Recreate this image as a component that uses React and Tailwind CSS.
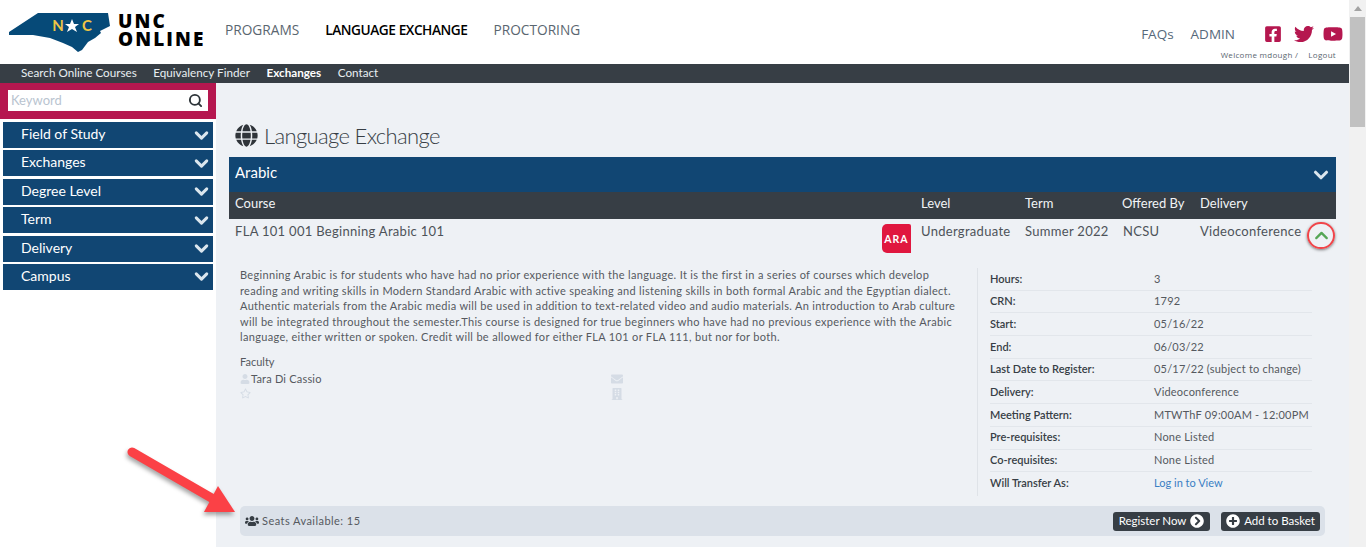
import { ChevronDown, ChevronUp, Search } from "lucide-react";
import {
  FaFacebookSquare,
  FaTwitter,
  FaYoutube,
  FaGlobe,
  FaUsers,
  FaChevronCircleRight,
  FaPlusCircle,
  FaUser,
  FaEnvelope,
  FaBuilding,
  FaRegStar,
} from "react-icons/fa";

const SUBNAV = ["Search Online Courses", "Equivalency Finder", "Exchanges", "Contact"];
const FILTERS = ["Field of Study", "Exchanges", "Degree Level", "Term", "Delivery", "Campus"];
const DETAILS = [
  ["Hours:", "3"],
  ["CRN:", "1792"],
  ["Start:", "05/16/22"],
  ["End:", "06/03/22"],
  ["Last Date to Register:", "05/17/22 (subject to change)"],
  ["Delivery:", "Videoconference"],
  ["Meeting Pattern:", "MTWThF 09:00AM - 12:00PM"],
  ["Pre-requisites:", "None Listed"],
  ["Co-requisites:", "None Listed"],
  ["Will Transfer As:", "Log in to View"],
];

function Logo() {
  return (
    <div className="flex items-start gap-[8px] w-[203px] pl-[9px]">
      <svg width="101" height="40" viewBox="0 0 101 40" className="shrink-0">
        <polygon
          points="0,20 29,1 99,1 101,14 91,19 92,21 86,26 79,30 73,38 69,40 63,35 54,31 41,26 24,23 0,23"
          fill="#064a78"
        />
        <text x="49" y="19" fontSize="15" fontWeight="700" fill="#efc545" fontFamily="Lato" textAnchor="middle">N</text>
        <polygon points="63,7 65,12 70,12 66,15 68,20 63,17 58,20 60,15 56,12 61,12" fill="#fff" />
        <text x="78" y="19" fontSize="15" fontWeight="700" fill="#efc545" fontFamily="Lato" textAnchor="middle">C</text>
      </svg>
      <div className="font-['Open_Sans',sans-serif] font-extrabold text-[19px] leading-[18px] tracking-[2.1px] text-black">
        <div>UNC</div>
        <div>ONLINE</div>
      </div>
    </div>
  );
}

function Header() {
  return (
    <header className="h-[64px] shrink-0 bg-white flex font-['Open_Sans',sans-serif]">
      <div className="pt-[12px]">
        <Logo />
      </div>
      <nav className="flex gap-[26px] ml-[22px] pt-[21px] text-[13.7px] leading-[18px] text-[#5a6670] h-fit">
        <span>PROGRAMS</span>
        <span className="text-black font-semibold tracking-[-0.45px]">LANGUAGE EXCHANGE</span>
        <span>PROCTORING</span>
      </nav>
      <div className="ml-auto flex flex-col items-end">
        <div className="flex items-center h-[46px] pt-[22px] pr-[6px] text-[13.5px] text-[#56687a]">
          <span className="mr-[17px]">FAQs</span>
          <span className="mr-[29px]">ADMIN</span>
          <FaFacebookSquare className="text-[18px] text-[#b5174f] mr-[12px]" />
          <FaTwitter className="text-[20px] text-[#b5174f] mr-[9px]" />
          <FaYoutube className="text-[20px] text-[#b5174f]" />
        </div>
        <div className="text-[8px] leading-[10px] mt-[4px] tracking-[0.3px] text-[#5a6670] pr-[13px]">
          Welcome mdough /<span className="ml-[10px]">Logout</span>
        </div>
      </div>
    </header>
  );
}

function SubNav() {
  return (
    <div className="h-[19px] shrink-0 bg-[#373e45] flex items-center pl-[21px] pb-[1px] gap-[16.5px] text-[11.7px] text-[#e8eef2] font-['Lato',sans-serif]">
      {SUBNAV.map((item) => (
        <span key={item} className={item === "Exchanges" ? "font-bold text-white" : ""}>
          {item}
        </span>
      ))}
    </div>
  );
}

function Sidebar() {
  return (
    <aside className="w-[216px] shrink-0 bg-white font-['Lato',sans-serif]">
      <div className="h-[36px] bg-[#b5174f] px-[8px] pt-[7px]">
        <div className="h-[21px] bg-white flex items-center justify-between pl-[3px] pr-[5px]">
          <span className="text-[13px] text-[#b9c4d0]">Keyword</span>
          <Search size={15} strokeWidth={3} className="text-[#2c3338]" />
        </div>
      </div>
      <div className="flex flex-col gap-[2.4px] pl-[3px] w-[213px] pt-[3px]">
        {FILTERS.map((item) => (
          <div key={item} className="h-[26px] bg-[#114673] flex items-center justify-between pl-[18px] pr-[1px] text-[14px] text-white">
            <span className="-mt-[3px]">{item}</span>
            <ChevronDown size={21} strokeWidth={3.4} className="text-[#dbe6ee]" />
          </div>
        ))}
      </div>
    </aside>
  );
}

function CourseBody() {
  return (
    <div className="flex pl-[11px] pt-[8px] h-[247px]">
      <div className="w-[737px] shrink-0 pr-[18px] text-[#55595f] font-['Lato',sans-serif]">
        <p className="text-[11px] leading-[15.6px] tracking-[0.32px]">
          Beginning Arabic is for students who have had no prior experience with the language. It is the first in a series of courses which develop reading and writing skills in Modern Standard Arabic with active speaking and listening skills in both formal Arabic and the Egyptian dialect. Authentic materials from the Arabic media will be used in addition to text-related video and audio materials. An introduction to Arab culture will be integrated throughout the semester.This course is designed for true beginners who have had no previous experience with the Arabic language, either written or spoken. Credit will be allowed for either FLA 101 or FLA 111, but nor for both.
        </p>
        <div className="mt-[9px] text-[11px] leading-[15px] h-[17px]">Faculty</div>
        <div className="flex h-[16px] items-center text-[11px] tracking-[0.2px]">
          <FaUser className="text-[10px] text-[#d5dce5] w-[10px]" />
          <span className="ml-[1px] w-[360px]">Tara Di Cassio</span>
          <FaEnvelope className="text-[12px] text-[#d5dce5]" />
        </div>
        <div className="flex h-[14px] items-center">
          <div className="w-[371px]">
            <FaRegStar className="text-[11px] text-[#d5dce5]" />
          </div>
          <FaBuilding className="text-[12px] text-[#d5dce5]" />
        </div>
      </div>
      <div className="border-l border-[#dfe3e8] h-[228px] pl-[12px] pr-[24px] w-[359px] mt-[1px]">
        {DETAILS.map(([label, value]) => (
          <div key={label} className="h-[22.7px] flex items-center border-b border-[#e2e6eb] last:border-b-0 text-[11px]">
            <span className="w-[164px] shrink-0 font-semibold text-[#373e45]">{label}</span>
            <span className={label === "Will Transfer As:" ? "text-[#3a7fc4]" : "text-[#55595f] tracking-[0.2px]"}>
              {value}
            </span>
          </div>
        ))}
      </div>
    </div>
  );
}

function Content() {
  return (
    <main className="flex-1 bg-[#eef1f5] pl-[13px] pr-[13px] font-['Lato',sans-serif]">
      <h1 className="h-[74px] flex items-center gap-[6px] pl-[6px] pt-[31px] text-[#373e45] text-[22px] font-light tracking-[-0.65px]">
        <FaGlobe className="text-[23px] text-[#2f3439]" />
        Language Exchange
      </h1>
      <div className="h-[35px] bg-[#114673] flex items-center justify-between pl-[6px] pr-[4px] text-[15px] text-white">
        <span className="-mt-[5px]">Arabic</span>
        <ChevronDown size={22} strokeWidth={3.4} className="text-[#dbe6ee]" />
      </div>
      <div className="h-[27px] bg-[#373e45] flex items-center pl-[6px] pb-[4px] text-[13px] text-[#f2f4f6]">
        <span className="w-[686px]">Course</span>
        <span className="w-[104px]">Level</span>
        <span className="w-[97px]">Term</span>
        <span className="w-[78px]">Offered By</span>
        <span>Delivery</span>
      </div>
      <div className="h-[40px] flex pl-[6px] pt-[4px] text-[13px] leading-[16px] text-[#4d5359] tracking-[0.3px]">
        <span className="w-[647px]">FLA 101 001 Beginning Arabic 101</span>
        <div className="w-[29px] h-[29px] mt-[1px] mr-[10px] bg-[#e0173f] rounded-tl-[5px] rounded-bl-[5px] rounded-tr-[2px] flex items-center justify-center text-white font-bold text-[10.5px] tracking-[1px]">
          ARA
        </div>
        <span className="w-[104px]">Undergraduate</span>
        <span className="w-[98px]">Summer 2022</span>
        <span className="w-[77px]">NCSU</span>
        <span>Videoconference</span>
      </div>
      <CourseBody />
      <div className="ml-[11px] mr-[11px] h-[30px] rounded-[5px] bg-[#dbe1e9] flex items-center pl-[5px] pr-[5px]">
        <FaUsers className="text-[14px] text-[#373e45] mr-[3px]" />
        <span className="text-[11px] tracking-[0.45px] text-[#55595f]">Seats Available: 15</span>
        <div className="ml-auto flex gap-[11px] text-[11.5px] text-white">
          <button className="h-[19px] w-[97px] bg-[#373e45] rounded-[3px] flex items-center justify-center gap-[4px]">
            Register Now <FaChevronCircleRight className="text-[14px]" />
          </button>
          <button className="h-[19px] w-[99px] bg-[#373e45] rounded-[3px] flex items-center justify-center gap-[4px]">
            <FaPlusCircle className="text-[14px]" /> Add to Basket
          </button>
        </div>
      </div>
    </main>
  );
}

function Annotations() {
  return (
    <>
      {/* circle around the row toggle */}
      <div className="absolute left-[1307px] top-[222px] w-[28px] h-[27px] rounded-full border-[2px] border-[#f0454a] shadow-[0_1px_3px_rgba(0,0,0,0.5)] flex items-center justify-center">
        <ChevronUp size={21} strokeWidth={2.6} className="text-[#55a655]" />
      </div>
      {/* arrow pointing at seats */}
      <svg className="absolute left-[120px] top-[440px]" width="130" height="85" viewBox="0 0 130 85" style={{ filter: "drop-shadow(-1px 3px 2px rgba(0,0,0,0.35))" }}>
        <path d="M12 12 L95 60" stroke="#fb4146" strokeWidth="9" strokeLinecap="round" />
        <polygon points="98,46 115,72 84,72" fill="#fb4146" />
      </svg>
    </>
  );
}

function Scrollbar() {
  return (
    <div className="w-[17px] shrink-0 bg-[#f1f1f1] flex flex-col items-center">
      <div className="h-[17px] flex items-center justify-center">
        <div className="w-0 h-0 border-l-[4px] border-r-[4px] border-b-[5px] border-l-transparent border-r-transparent border-b-[#a3a3a3]" />
      </div>
      <div className="w-[15px] h-[110px] bg-[#c1c1c1]" />
    </div>
  );
}

export default function App() {
  return (
    <div className="relative w-[1366px] h-[547px] overflow-hidden flex bg-white">
      <div className="w-[1349px] shrink-0 flex flex-col">
        <Header />
        <SubNav />
        <div className="flex flex-1">
          <Sidebar />
          <Content />
        </div>
      </div>
      <Scrollbar />
      <Annotations />
    </div>
  );
}
